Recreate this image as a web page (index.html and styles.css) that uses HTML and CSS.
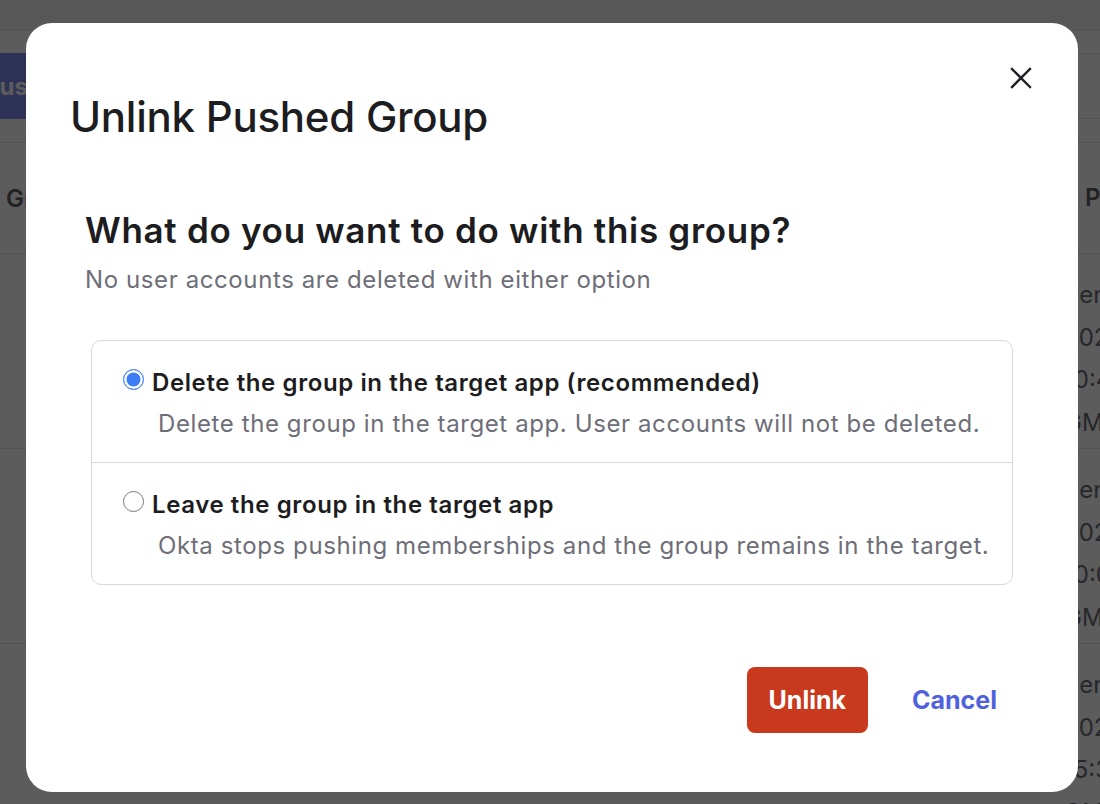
FILE: index.html
```html
<!DOCTYPE html>
<html lang="en">
<head>
  <meta charset="UTF-8">
  <meta name="viewport" content="width=device-width, initial-scale=1.0">
  <title>Unlink Pushed Group</title>
  <link rel="stylesheet" href="styles.css">
</head>
<body>
  <div class="page" aria-hidden="true">
    <div class="topbar"></div>
    <div class="toolbar">
      <button class="push-button">Push</button>
      <div class="search"></div>
    </div>
    <div class="table">
      <div class="row head">
        <div class="cell name">Group</div>
        <div class="cell status">Push Status</div>
      </div>
      <div class="row">
        <div class="cell name"></div>
        <div class="cell status">Pending<br>2024<br>10:45<br>GMT</div>
      </div>
      <div class="row">
        <div class="cell name"></div>
        <div class="cell status">Pending<br>2024<br>10:02<br>GMT</div>
      </div>
      <div class="row">
        <div class="cell name"></div>
        <div class="cell status">Pending<br>2024<br>15:30<br>GMT</div>
      </div>
    </div>
  </div>

  <div class="overlay">
    <div class="modal" role="dialog" aria-labelledby="modal-title">
      <div class="modal-header">
        <h1 id="modal-title">Unlink Pushed Group</h1>
        <button class="close-button" aria-label="Close">
          <svg width="22" height="22" viewBox="0 0 22 22" fill="none" stroke="currentColor" stroke-width="2.3" stroke-linecap="square">
            <path d="M2 2L20 20M20 2L2 20"/>
          </svg>
        </button>
      </div>

      <div class="modal-body">
        <h2>What do you want to do with this group?</h2>
        <p class="hint">No user accounts are deleted with either option</p>

        <div class="options">
          <label class="option">
            <input type="radio" name="unlink" value="delete" checked>
            <span class="option-title">Delete the group in the target app (recommended)</span>
            <span class="option-desc">Delete the group in the target app. User accounts will not be deleted.</span>
          </label>
          <label class="option">
            <input type="radio" name="unlink" value="leave">
            <span class="option-title">Leave the group in the target app</span>
            <span class="option-desc">Okta stops pushing memberships and the group remains in the target.</span>
          </label>
        </div>
      </div>

      <div class="modal-footer">
        <button class="danger-button">Unlink</button>
        <button class="link-button">Cancel</button>
      </div>
    </div>
  </div>
</body>
</html>
```

FILE: styles.css
```css
body {
  margin: 0;
  font-family: Inter, "Noto Sans", sans-serif;
  color: #1d1d21;
  background: #fff;
  overflow: hidden;
}
button {
  font-family: inherit;
  cursor: pointer;
}

/* page behind the dialog */
.topbar {
  height: 30px;
  background: #f2f2f2;
  border-bottom: 1px solid #e3e3e3;
}
.toolbar {
  display: flex;
  justify-content: space-between;
  padding: 22px 0 23px;
  border-bottom: 1px solid #e3e3e3;
  margin-left: -40px;
}
.push-button {
  height: 66px;
  padding: 0 24px;
  border: none;
  border-radius: 8px;
  background: #7f8cee;
  color: #fff;
  font-size: 24px;
  font-weight: 700;
}
.search {
  width: 320px;
  height: 66px;
  box-sizing: border-box;
  border: 1px solid #e8e8e8;
  border-right: none;
}
.row {
  display: flex;
  justify-content: space-between;
  height: 195px;
  box-sizing: border-box;
  border-bottom: 1px solid #e3e3e3;
  font-size: 24px;
  color: #6e6e78;
}
.row.head {
  height: 111px;
  align-items: center;
  font-weight: 600;
  color: #5e5e66;
}
.cell.name {
  padding-left: 6px;
}
.cell.status {
  width: 36px;
  padding-top: 20px;
  line-height: 42.5px;
  white-space: nowrap;
}
.row.head .cell.status {
  width: 15px;
  padding-top: 0;
}

/* dialog */
.overlay {
  position: fixed;
  inset: 0;
  background: rgba(0, 0, 0, 0.64);
  padding: 23px 0 0 26px;
}
.modal {
  width: 1052px;
  box-sizing: border-box;
  padding: 44px 44px 59px;
  background: #fff;
  border-radius: 26px;
}
.modal-header {
  display: flex;
  justify-content: space-between;
  align-items: flex-start;
}
.modal-header h1 {
  margin: 0;
  padding-top: 26px;
  font-size: 42px;
  line-height: 48px;
  font-weight: 500;
  letter-spacing: -0.25px;
}
.close-button {
  display: flex;
  padding: 0;
  margin: 0 2px 0 0;
  border: none;
  background: none;
  color: #1d1d21;
}
.modal-body {
  padding: 0 21px 0 15px;
}
.modal-body h2 {
  margin: 69px 0 0;
  font-size: 35px;
  line-height: 40px;
  font-weight: 600;
  letter-spacing: 0.7px;
}
.hint {
  margin: 14px 0 0;
  font-size: 24px;
  line-height: 32px;
  letter-spacing: 0.6px;
  color: #6e6e78;
}
.options {
  margin: 44px 0 0 6px;
  border: 1px solid #d7d7dc;
  border-radius: 10px;
}
.option {
  display: grid;
  grid-template-columns: 21px 1fr;
  column-gap: 8px;
  padding: 26px 20px 22px 31px;
  font-size: 24px;
  line-height: 32px;
  letter-spacing: 0.6px;
  cursor: pointer;
}
.option + .option {
  border-top: 1px solid #d7d7dc;
}
.option input {
  appearance: none;
  width: 21px;
  height: 21px;
  margin: 2px 0 0;
  border: 1.5px solid #77777f;
  border-radius: 50%;
  background: #fff;
}
.option input:checked {
  border-color: #3d7ef5;
  background: #3d7ef5;
  box-shadow: inset 0 0 0 2.5px #fff;
}
.option-title {
  font-weight: 600;
}
.option-desc {
  grid-column: 2;
  margin-top: 9px;
  padding-left: 6px;
  color: #6e6e78;
}
.modal-footer {
  display: flex;
  justify-content: flex-end;
  gap: 22px;
  margin-top: 82px;
  padding-right: 15px;
}
.danger-button {
  height: 66px;
  padding: 0 22px;
  border: none;
  border-radius: 8px;
  background: #c8391e;
  color: #fff;
  font-size: 25px;
  font-weight: 700;
}
.link-button {
  height: 66px;
  padding: 0 22px;
  border: none;
  background: none;
  color: #4f62dc;
  font-size: 25px;
  font-weight: 700;
}
```
